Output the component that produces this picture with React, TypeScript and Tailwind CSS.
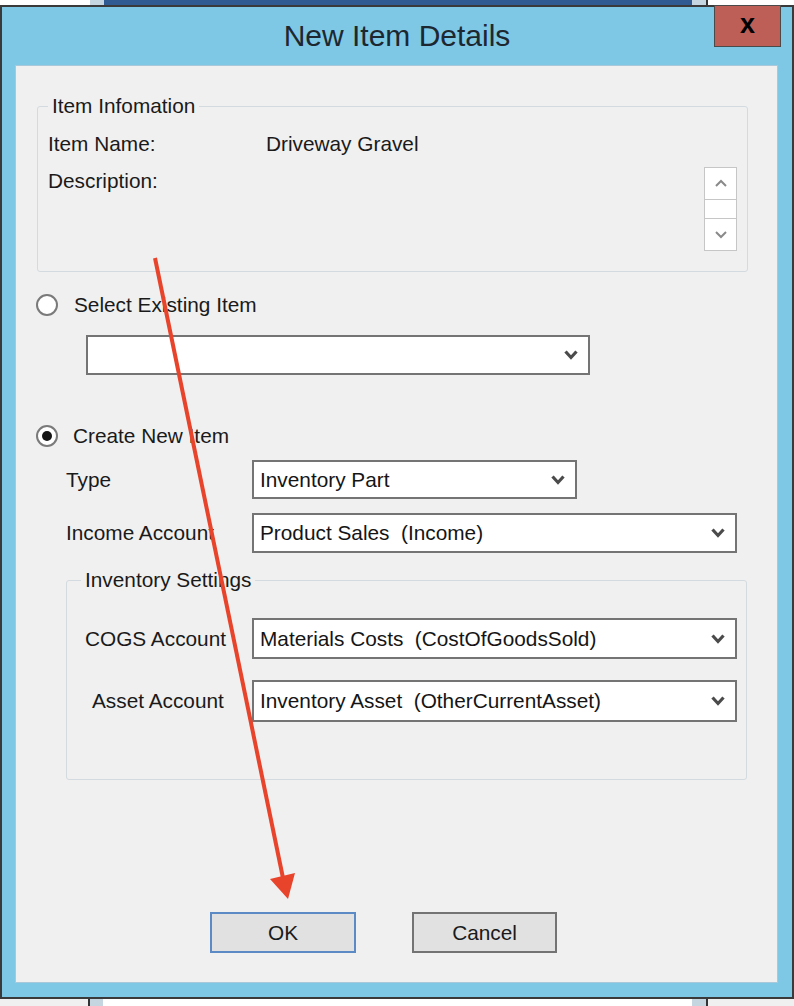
import React from 'react';

// small bold "v" used by the combo boxes
function ComboChevron() {
  return (
    <svg width="14" height="10" viewBox="0 0 14 10" className="shrink-0">
      <path d="M1.5 1.5 L7 7.5 L12.5 1.5" fill="none" stroke="#4b4b4b" strokeWidth="3.2" />
    </svg>
  );
}

function SpinArrow({ up }: { up?: boolean }) {
  return (
    <svg width="14" height="9" viewBox="0 0 14 9">
      <path d={up ? 'M2 7 L7 2 L12 7' : 'M2 2 L7 7 L12 2'} fill="none" stroke="#8a8a8a" strokeWidth="2" />
    </svg>
  );
}

function Combo({ value, className }: { value?: string; className: string }) {
  return (
    <div className={`flex items-center justify-between border-2 border-[#747474] bg-white pl-[6px] pr-[10px] ${className}`}>
      <span className="whitespace-pre text-[#151515]">{value}</span>
      <ComboChevron />
    </div>
  );
}

function Radio({ checked }: { checked?: boolean }) {
  return (
    <span className="flex h-[22px] w-[22px] shrink-0 items-center justify-center rounded-full border-2 border-[#7a7a7a] bg-white">
      {checked && <span className="h-[10px] w-[10px] rounded-full bg-[#141414]" />}
    </span>
  );
}

export default function App() {
  return (
    <div className="relative h-[1006px] w-[794px] overflow-hidden bg-[#f0f0f0] font-['Liberation_Sans',Arial,sans-serif] text-[20.8px] leading-[24px] text-[#1a1a1a]">
      {/* window behind the dialog */}
      <div className="flex h-[5px]">
        <div className="w-[90px] bg-white" />
        <div className="w-[14px] bg-[#c6d6e0]" />
        <div className="w-[588px] bg-[#2f5a92]" />
        <div className="w-[14px] bg-[#c6d6e0]" />
        <div className="w-[2px] bg-[#333]" />
        <div className="flex-1 bg-white" />
      </div>

      {/* dialog */}
      <div className="flex h-[994px] flex-col border-2 border-[#3a3a3a] bg-[#7ec8e6]">
        <div className="grid h-[58px] grid-cols-[1fr_auto_1fr]">
          <div />
          <h1 className="self-center text-[30px] leading-[34px] text-[#1d2730]">New Item Details</h1>
          <div className="flex items-start justify-end">
            <button className="-mt-[2px] mr-[11px] flex h-[42px] w-[67px] items-center justify-center border border-[#4a4a4a] bg-[#bd5f57] pb-[4px] text-[27px] font-bold leading-none text-black">
              x
            </button>
          </div>
        </div>

        <div className="ml-[13px] mr-[14px] flex h-[918px] flex-col bg-[#f0f0f0] shadow-[inset_0_0_0_1px_#a9c8da]">
          <fieldset className="ml-[22px] mr-[30px] mt-[29px] rounded-[3px] border border-[#d3dbe0] pb-[20px] pl-[10px] pr-[10px]">
            <legend className="px-[4px]">Item Infomation</legend>
            <div className="mt-[14px] flex h-[24px]">
              <span className="w-[218px]">Item Name:</span>
              <span>Driveway Gravel</span>
            </div>
            <div className="mt-[11px] flex justify-between">
              <span className="mt-[2px]">Description:</span>
              <div className="flex h-[84px] w-[33px] flex-col border border-[#c6c6c6] bg-white">
                <div className="flex h-[32px] items-center justify-center border-b border-[#c6c6c6]">
                  <SpinArrow up />
                </div>
                <div className="h-[19px] border-b border-[#c6c6c6]" />
                <div className="flex flex-1 items-center justify-center">
                  <SpinArrow />
                </div>
              </div>
            </div>
          </fieldset>

          <label className="ml-[21px] mt-[21px] flex h-[24px] items-center gap-[16px]">
            <Radio />
            <span>Select Existing Item</span>
          </label>
          <Combo className="ml-[71px] mt-[18px] h-[40px] w-[504px]" />

          <label className="ml-[21px] mt-[49px] flex h-[24px] items-center gap-[15px]">
            <Radio checked />
            <span>Create New Item</span>
          </label>

          <div className="ml-[51px] mt-[12px] flex items-center">
            <span className="w-[186px]">Type</span>
            <Combo value="Inventory Part" className="h-[39px] w-[325px]" />
          </div>
          <div className="ml-[51px] mt-[14px] flex items-center">
            <span className="w-[186px]">Income Account</span>
            <Combo value="Product Sales  (Income)" className="h-[40px] w-[485px]" />
          </div>

          <fieldset className="ml-[51px] mr-[31px] mt-[15px] rounded-[3px] border border-[#d3dbe0] pb-[57px] pl-[14px] pr-[9px]">
            <legend className="px-[4px]">Inventory Settings</legend>
            <div className="mt-[26px] flex items-center">
              <span className="w-[171px] pl-[4px]">COGS Account</span>
              <Combo value="Materials Costs  (CostOfGoodsSold)" className="h-[41px] w-[485px]" />
            </div>
            <div className="mt-[21px] flex items-center">
              <span className="w-[171px] pl-[11px]">Asset Account</span>
              <Combo value="Inventory Asset  (OtherCurrentAsset)" className="h-[42px] w-[485px]" />
            </div>
          </fieldset>

          <div className="ml-[195px] mt-[132px] flex gap-[56px]">
            <button className="h-[41px] w-[146px] border-2 border-[#5b8ac4] bg-[#e1e1e1]">OK</button>
            <button className="h-[41px] w-[145px] border-2 border-[#737373] bg-[#e1e1e1]">Cancel</button>
          </div>
        </div>
      </div>

      {/* window behind, bottom edge */}
      <div className="flex h-[7px]">
        <div className="w-[88px] bg-[#f0f0f0]" />
        <div className="w-[2px] bg-[#333]" />
        <div className="w-[13px] bg-[#c6d6e0]" />
        <div className="w-[589px] bg-white" />
        <div className="w-[14px] bg-[#c6d6e0]" />
        <div className="w-[2px] bg-[#333]" />
        <div className="flex-1 bg-[#f0f0f0]" />
      </div>

      {/* red annotation arrow */}
      <svg className="pointer-events-none absolute inset-0" width="794" height="1006" viewBox="0 0 794 1006">
        <line x1="155" y1="258" x2="283" y2="878" stroke="#e8432b" strokeWidth="4" />
        <polygon points="270,879 295,873 288,899" fill="#e8432b" />
      </svg>
    </div>
  );
}
